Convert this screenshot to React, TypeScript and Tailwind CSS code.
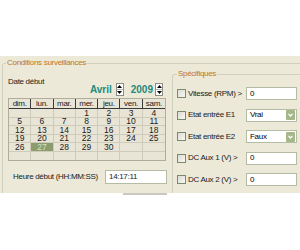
import React from 'react';

const weeks: (number | null)[][] = [
  [null, null, null, 1, 2, 3, 4],
  [5, 6, 7, 8, 9, 10, 11],
  [12, 13, 14, 15, 16, 17, 18],
  [19, 20, 21, 22, 23, 24, 25],
  [26, 27, 28, 29, 30, null, null],
  [null, null, null, null, null, null, null],
];

const days = ['dim.', 'lun.', 'mar.', 'mer.', 'jeu.', 'ven.', 'sam.'];

const Spinner = () => (
  <div className="flex h-[13px] w-[8px] flex-col border border-[#8d8d84] bg-white">
    <div className="flex flex-1 items-center justify-center border-b border-[#b8b8b0]">
      <svg width="5" height="3" viewBox="0 0 5 3">
        <path d="M0 3 L2.5 0 L5 3 Z" fill="#000" />
      </svg>
    </div>
    <div className="flex flex-1 items-center justify-center">
      <svg width="5" height="3" viewBox="0 0 5 3">
        <path d="M0 0 L2.5 3 L5 0 Z" fill="#000" />
      </svg>
    </div>
  </div>
);

const Checkbox = () => (
  <div className="h-[9px] w-[9px] shrink-0 border border-[#7c8a6a] bg-gradient-to-br from-[#dcdcd4] to-[#f8f8f4]" />
);

const TextBox = ({ value }: { value: string }) => (
  <div className="flex h-[13px] w-[51px] items-center border border-[#b4bca4] bg-white pl-[3px] text-black">
    {value}
  </div>
);

const Select = ({ value }: { value: string }) => (
  <div className="flex h-[13px] w-[51px] items-center border border-[#b4bca4] bg-white pl-[3px] text-black">
    <span className="flex-1">{value}</span>
    <div className="mr-[1px] flex h-[10px] w-[9px] items-center justify-center rounded-[1px] bg-[#a6b88a]">
      <svg width="5" height="4" viewBox="0 0 5 4">
        <path d="M0.5 0.8 L2.5 3 L4.5 0.8" stroke="#fff" strokeWidth="1.2" fill="none" />
      </svg>
    </div>
  </div>
);

const specRows: { label: string; kind: 'text' | 'select'; value: string }[] = [
  { label: 'Vitesse (RPM) >', kind: 'text', value: '0' },
  { label: 'Etat entrée E1', kind: 'select', value: 'Vrai' },
  { label: 'Etat entrée E2', kind: 'select', value: 'Faux' },
  { label: 'DC Aux 1 (V) >', kind: 'text', value: '0' },
  { label: 'DC Aux 2 (V) >', kind: 'text', value: '0' },
];

export default function App() {
  return (
    <div className="h-[250px] w-[300px] overflow-hidden bg-white font-['Liberation_Sans',Arial,sans-serif] text-[8px] leading-none tracking-[-0.3px] text-[#1a1a1a]">
      <div className="h-[56px]" />

      {/* Panel */}
      <div className="h-[137px] overflow-hidden bg-[#ece9d8] pl-[2px] pt-[7px]">
        <div className="relative h-[150px] w-[310px] rounded-[2px] border border-[#d0d0bf]">
          <span className="absolute left-[3px] top-[-5px] bg-[#ece9d8] px-[1px] text-[#c27524]">
            Conditions surveillances
          </span>

          <div className="flex pl-[5px]">
            {/* Left column */}
            <div className="flex w-[159px] flex-col">
              <div className="mt-[14px] h-[10px]">Date début</div>
              <div className="mt-[-5px] flex h-[13px] items-center justify-end pr-[4px]">
                <span className="text-[10px] font-bold tracking-normal text-[#25897b]">Avril</span>
                <div className="ml-[4px]">
                  <Spinner />
                </div>
                <span className="ml-[7px] text-[10px] font-bold tracking-normal text-[#25897b]">2009</span>
                <div className="ml-[2px]">
                  <Spinner />
                </div>
              </div>

              {/* Calendar */}
              <div className="mt-[2px] w-[158px] border border-[#b0ad9c] bg-[#e8e5d6]">
                <div className="grid h-[10px] grid-cols-7 border-b border-[#3a3a3a]">
                  {days.map((d, i) => (
                    <div
                      key={d}
                      className={`flex items-end justify-center pb-[1px] leading-[7px] ${i < 6 ? 'border-r border-[#3a3a3a]' : ''}`}
                    >
                      {d}
                    </div>
                  ))}
                </div>
                {weeks.map((w, ri) => (
                  <div
                    key={ri}
                    className={`grid grid-cols-7 ${ri % 2 === 0 ? 'h-[9px]' : 'h-[8px]'} ${ri < 5 ? 'border-b border-[#cfcbba]' : ''}`}
                  >
                    {w.map((n, ci) => (
                      <div
                        key={ci}
                        className={`flex items-center justify-center text-[8.5px] leading-[7px] tracking-normal ${ci < 6 ? 'border-r border-[#cfcbba]' : ''} ${n === 27 ? 'bg-[#8d9c6e] text-[#d6e2c4]' : ''}`}
                      >
                        {n ?? ''}
                      </div>
                    ))}
                  </div>
                ))}
              </div>

              <div className="mt-[9px] flex h-[14px] items-center">
                <span className="ml-[5px] w-[92px]">Heure début (HH:MM:SS)</span>
                <div className="flex h-[14px] w-[62px] items-center border border-[#b4bca4] bg-white pl-[3px]">
                  14:17:11
                </div>
              </div>
            </div>

            {/* Spécifiques */}
            <div className="relative ml-[5px] mt-[10px] h-[140px] w-[140px] rounded-[2px] border border-[#d0d0bf] pl-[4px] pt-[8px]">
              <span className="absolute left-[4px] top-[-5px] bg-[#ece9d8] px-[1px] text-[#c27524]">
                Spécifiques
              </span>
              {specRows.map((r) => (
                <div key={r.label} className="flex h-[21.5px] items-center">
                  <Checkbox />
                  <span className="ml-[2px] w-[58px] whitespace-nowrap">{r.label}</span>
                  {r.kind === 'text' ? <TextBox value={r.value} /> : <Select value={r.value} />}
                </div>
              ))}
            </div>
          </div>
        </div>
      </div>

      <div className="ml-[123px] h-[2px] w-[44px] bg-[#c8c8c0]" />
    </div>
  );
}
